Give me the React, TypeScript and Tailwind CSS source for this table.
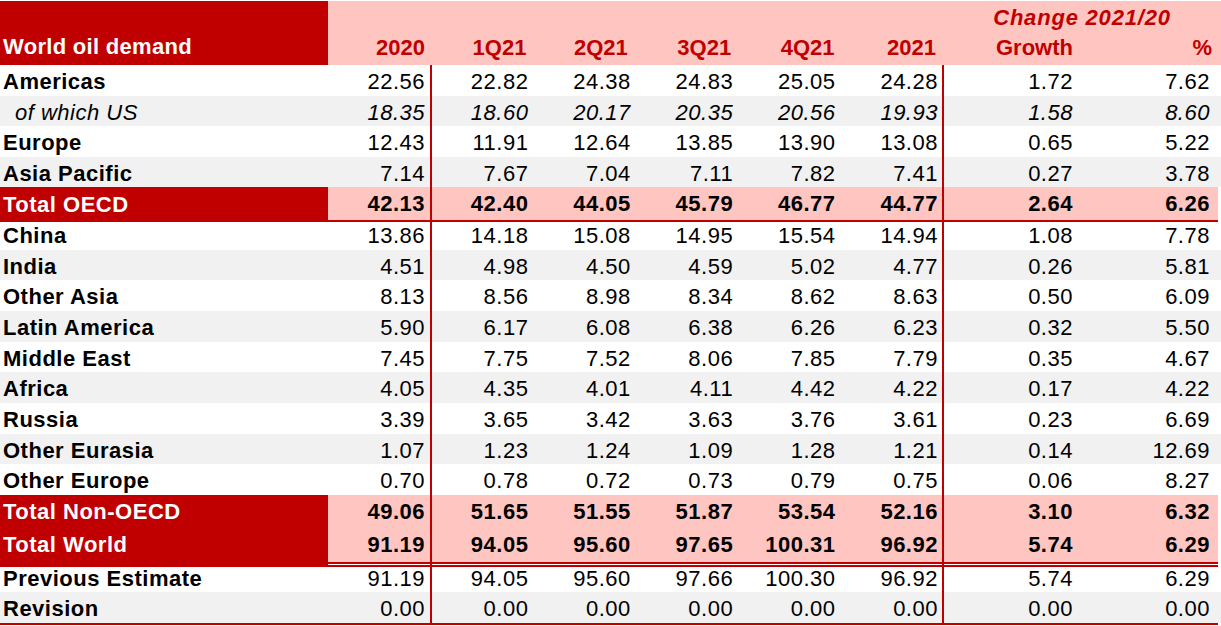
const RED = "bg-[#c00000]";
const PINK = "bg-[#ffc5c0]";

const GRID =
  "grid grid-cols-[328px_104px_102.4px_102.4px_102.4px_102.4px_102.4px_136px_138px]";

// right padding + vertical rules per value column
const valCls = [
  "border-r-2 border-[#c00000] pr-[5px]",
  "pr-[6px]",
  "pr-[6px]",
  "pr-[6px]",
  "pr-[6px]",
  "border-r-2 border-[#c00000] pr-[4px]",
  "pr-[7px]",
  "pr-[8px]",
];

const padOnly = ["pr-[5px]", "pr-[6px]", "pr-[6px]", "pr-[6px]", "pr-[6px]", "pr-[4px]", "pr-[7px]", "pr-[8px]"];

const headPad = ["pr-[7px]", "pr-[8px]", "pr-[9px]", "pr-[8px]", "pr-[7px]", "pr-[8px]", "pr-[7px]", "pr-[6px]"];

const HEADERS = ["2020", "1Q21", "2Q21", "3Q21", "4Q21", "2021", "Growth", "%"];

type Row = { label: string; values: string[] };

const OECD: Row[] = [
  { label: "Americas", values: ["22.56", "22.82", "24.38", "24.83", "25.05", "24.28", "1.72", "7.62"] },
  { label: "of which US", values: ["18.35", "18.60", "20.17", "20.35", "20.56", "19.93", "1.58", "8.60"] },
  { label: "Europe", values: ["12.43", "11.91", "12.64", "13.85", "13.90", "13.08", "0.65", "5.22"] },
  { label: "Asia Pacific", values: ["7.14", "7.67", "7.04", "7.11", "7.82", "7.41", "0.27", "3.78"] },
];

const NON_OECD: Row[] = [
  { label: "China", values: ["13.86", "14.18", "15.08", "14.95", "15.54", "14.94", "1.08", "7.78"] },
  { label: "India", values: ["4.51", "4.98", "4.50", "4.59", "5.02", "4.77", "0.26", "5.81"] },
  { label: "Other Asia", values: ["8.13", "8.56", "8.98", "8.34", "8.62", "8.63", "0.50", "6.09"] },
  { label: "Latin America", values: ["5.90", "6.17", "6.08", "6.38", "6.26", "6.23", "0.32", "5.50"] },
  { label: "Middle East", values: ["7.45", "7.75", "7.52", "8.06", "7.85", "7.79", "0.35", "4.67"] },
  { label: "Africa", values: ["4.05", "4.35", "4.01", "4.11", "4.42", "4.22", "0.17", "4.22"] },
  { label: "Russia", values: ["3.39", "3.65", "3.42", "3.63", "3.76", "3.61", "0.23", "6.69"] },
  { label: "Other Eurasia", values: ["1.07", "1.23", "1.24", "1.09", "1.28", "1.21", "0.14", "12.69"] },
  { label: "Other Europe", values: ["0.70", "0.78", "0.72", "0.73", "0.79", "0.75", "0.06", "8.27"] },
];

const totalOecd = ["42.13", "42.40", "44.05", "45.79", "46.77", "44.77", "2.64", "6.26"];
const totalNonOecd = ["49.06", "51.65", "51.55", "51.87", "53.54", "52.16", "3.10", "6.32"];
const totalWorld = ["91.19", "94.05", "95.60", "97.65", "100.31", "96.92", "5.74", "6.29"];

const BOTTOM: Row[] = [
  { label: "Previous Estimate", values: ["91.19", "94.05", "95.60", "97.66", "100.30", "96.92", "5.74", "6.29"] },
  { label: "Revision", values: ["0.00", "0.00", "0.00", "0.00", "0.00", "0.00", "0.00", "0.00"] },
];

function PlainRow({ row, gray, height }: { row: Row; gray: boolean; height: string }) {
  const sub = row.label === "of which US";
  return (
    <div className={`${GRID} ${height} ${gray ? "bg-[#f1f1f1]" : "bg-white"}`}>
      <div
        className={`flex items-center ${sub ? "pl-[15px] italic font-normal" : "pl-[3px] font-bold"}`}
      >
        {row.label}
      </div>
      {row.values.map((v, i) => (
        <div key={i} className={`flex items-center justify-end ${valCls[i]} ${sub ? "italic" : ""}`}>
          {v}
        </div>
      ))}
    </div>
  );
}

export default function App() {
  return (
    <div
      className="pt-px w-[1221px] bg-white text-black text-[22px] tracking-[0.5px]"
      style={{ fontFamily: '"Liberation Sans", Arial, sans-serif' }}
    >
      {/* Header */}
      <div className={`${GRID} grid-rows-[32px_32px] ${PINK} font-bold text-[#c00000] tracking-normal`}>
        <div className={`row-span-2 ${RED} text-white flex items-end pl-[3px] pb-[2px] tracking-[0.3px]`}>
          World oil demand
        </div>
        <div className="col-span-6" />
        <div className="col-span-2 flex items-center justify-center italic tracking-[0.8px] pl-[2px]">
          Change 2021/20
        </div>
        {HEADERS.map((h, i) => (
          <div key={h} className={`flex items-center justify-end pb-[3px] ${headPad[i]}`}>
            {h}
          </div>
        ))}
      </div>

      {OECD.map((r, i) => (
        <PlainRow key={r.label} row={r} gray={i % 2 === 1} height="h-[30.5px]" />
      ))}

      {/* Total OECD */}
      <div className={`${GRID} h-[32px] font-bold`}>
        <div className={`${RED} text-white flex items-center pl-[3px]`}>Total OECD</div>
        {totalOecd.map((v, i) => (
          <div
            key={i}
            className={`${PINK} flex items-center justify-end border-b-2 border-b-[#c00000] ${valCls[i]}`}
          >
            {v}
          </div>
        ))}
      </div>

      {NON_OECD.map((r, i) => (
        <PlainRow key={r.label} row={r} gray={i % 2 === 1} height="h-[30.67px]" />
      ))}

      {/* Total Non-OECD */}
      <div className={`${GRID} h-[33px] font-bold`}>
        <div className="flex flex-col">
          <div className={`flex-1 ${RED} text-white flex items-center pl-[3px]`}>Total Non-OECD</div>
          <div className="h-[2px] bg-white" />
        </div>
        {totalNonOecd.map((v, i) => (
          <div
            key={i}
            className={`${PINK} flex items-center justify-end border-b-2 border-b-[#c00000] ${valCls[i]}`}
          >
            {v}
          </div>
        ))}
      </div>

      {/* Total World */}
      <div className={`${GRID} h-[34px] font-bold`}>
        <div className={`${RED} text-white flex items-center pl-[3px] pb-[6px]`}>Total World</div>
        {totalWorld.map((v, i) => (
          <div
            key={i}
            className={`flex flex-col ${i === 0 || i === 5 ? "border-r-2 border-[#c00000]" : ""}`}
          >
            <div className={`flex-1 ${PINK} flex items-center justify-end ${padOnly[i]}`}>{v}</div>
            <div className={`h-[2px] ${RED}`} />
            <div className="h-px bg-white" />
            <div className={`h-[2px] ${RED}`} />
          </div>
        ))}
      </div>

      {BOTTOM.map((r, i) => (
        <PlainRow key={r.label} row={r} gray={i % 2 === 1} height="h-[30.5px]" />
      ))}
      <div className={`w-[1218px] h-[2px] ${RED}`} />
    </div>
  );
}
